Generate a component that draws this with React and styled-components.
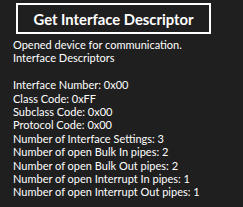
import styled, { createGlobalStyle } from "styled-components";

const Global = createGlobalStyle`
  html, body {
    margin: 0;
    padding: 0;
    background: #1f1f1f;
  }
`;

const Page = styled.div`
  width: 243px;
  height: 207px;
  background: #1f1f1f;
  color: #ffffff;
  font-family: Lato, "Open Sans", sans-serif;
  padding: 3px 0 0 13px;
  box-sizing: border-box;
  overflow: hidden;
`;

const Button = styled.button`
  display: block;
  margin-left: 3px;
  width: 195px;
  height: 31px;
  background: transparent;
  border: 2px solid #ffffff;
  color: #ffffff;
  font-family: Lato, "Open Sans", sans-serif;
  font-weight: 700;
  font-size: 14.8px;
  padding: 0;
  cursor: pointer;
`;

const Log = styled.div`
  margin-top: 4px;
  font-size: 11px;
  line-height: 13.4px;
  white-space: pre;
`;

const Line = styled.div`
  height: 13.4px;
`;

const lines = [
  "Opened device for communication.",
  "Interface Descriptors",
  "",
  "Interface Number: 0x00",
  "Class Code: 0xFF",
  "Subclass Code: 0x00",
  "Protocol Code: 0x00",
  "Number of Interface Settings: 3",
  "Number of open Bulk In pipes: 2",
  "Number of open Bulk Out pipes: 2",
  "Number of open Interrupt In pipes: 1",
  "Number of open Interrupt Out pipes: 1",
];

export default function App() {
  return (
    <Page>
      <Global />
      <Button>Get Interface Descriptor</Button>
      <Log>
        {lines.map((l, i) => (
          <Line key={i}>{l}</Line>
        ))}
      </Log>
    </Page>
  );
}
